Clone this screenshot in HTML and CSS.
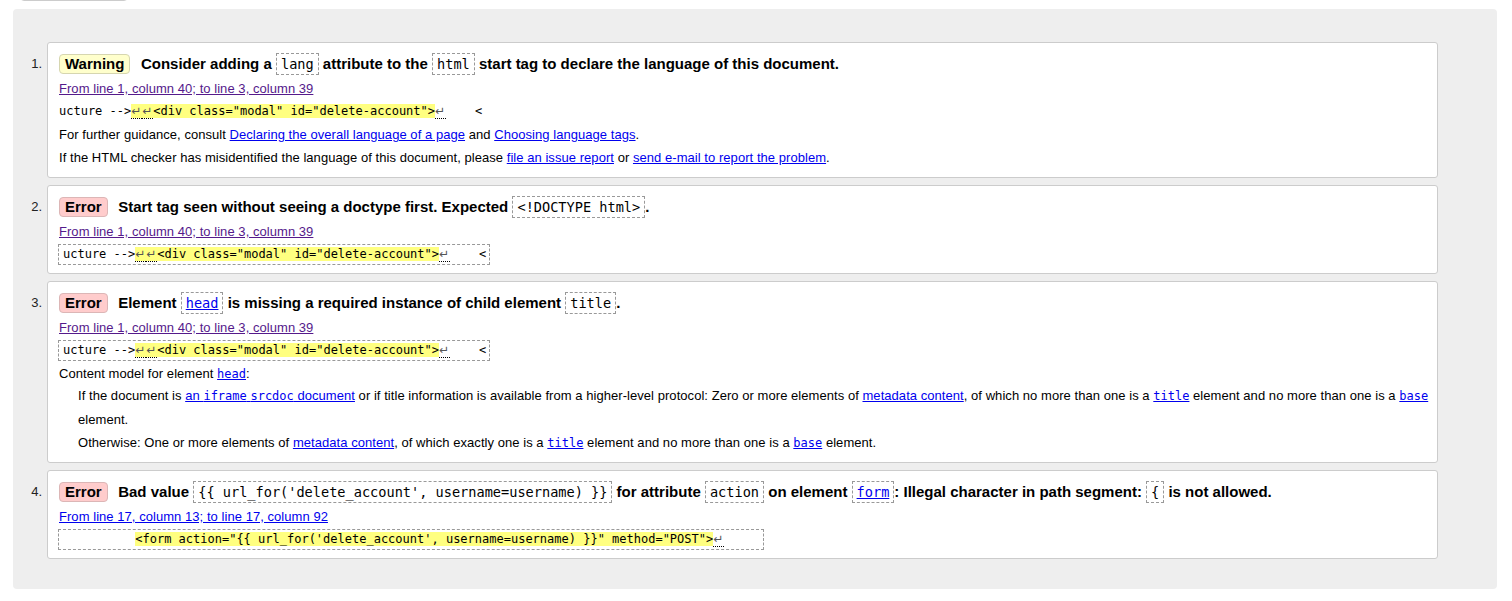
FILE: index.html
```html
<!DOCTYPE html>
<html lang="en">
<head>
<meta charset="utf-8">
<title>Validation results</title>
<link rel="stylesheet" href="styles.css">
</head>
<body>
<div class="stub"></div>
<div class="panel">
  <ol class="results">
    <li class="item">
      <span class="num">1.</span>
      <div class="card tall">
        <p class="title"><strong class="badge warn">Warning</strong><span>Consider adding a <code>lang</code> attribute to the <code>html</code> start tag to declare the language of this document.</span></p>
        <p class="line"><a class="vis" href="#l1">From line 1, column 40; to line 3, column 39</a></p>
        <p><code class="ex plain">ucture --&gt;<b><span class="lf">↵</span><span class="lf">↵</span>&lt;div class="modal" id="delete-account"&gt;</b><span class="lf">↵</span>    &lt;</code></p>
        <p class="line">For further guidance, consult <a href="#g1">Declaring the overall language of a page</a> and <a href="#g2">Choosing language tags</a>.</p>
        <p class="line">If the HTML checker has misidentified the language of this document, please <a href="#g3">file an issue report</a> or <a href="#g4">send e-mail to report the problem</a>.</p>
      </div>
    </li>
    <li class="item">
      <span class="num">2.</span>
      <div class="card">
        <p class="title"><strong class="badge err">Error</strong><span>Start tag seen without seeing a doctype first. Expected <code>&lt;!DOCTYPE html&gt;</code>.</span></p>
        <p class="line"><a class="vis" href="#l2">From line 1, column 40; to line 3, column 39</a></p>
        <p><code class="ex boxed">ucture --&gt;<b><span class="lf">↵</span><span class="lf">↵</span>&lt;div class="modal" id="delete-account"&gt;</b><span class="lf">↵</span>    &lt;</code></p>
      </div>
    </li>
    <li class="item">
      <span class="num">3.</span>
      <div class="card">
        <p class="title"><strong class="badge err">Error</strong><span>Element <code><a href="#h1">head</a></code> is missing a required instance of child element <code>title</code>.</span></p>
        <p class="line"><a class="vis" href="#l3">From line 1, column 40; to line 3, column 39</a></p>
        <p><code class="ex boxed">ucture --&gt;<b><span class="lf">↵</span><span class="lf">↵</span>&lt;div class="modal" id="delete-account"&gt;</b><span class="lf">↵</span>    &lt;</code></p>
        <p class="cm">Content model for element <a class="mono" href="#h2">head</a>:</p>
        <div class="dd">
          <p class="line">If the document is <a href="#s1">an <span class="mono">iframe</span> <span class="mono">srcdoc</span> document</a> or if title information is available from a higher-level protocol: Zero or more elements of <a href="#m1">metadata content</a>, of which no more than one is a <a class="mono" href="#t1">title</a> element and no more than one is a <a class="mono" href="#b1">base</a> element.</p>
          <p class="line">Otherwise: One or more elements of <a href="#m2">metadata content</a>, of which exactly one is a <a class="mono" href="#t2">title</a> element and no more than one is a <a class="mono" href="#b2">base</a> element.</p>
        </div>
      </div>
    </li>
    <li class="item">
      <span class="num">4.</span>
      <div class="card">
        <p class="title"><strong class="badge err">Error</strong><span>Bad value <code>{{ url_for('delete_account', username=username) }}</code> for attribute <code>action</code> on element <code><a href="#f1">form</a></code>: Illegal character in path segment: <code>{</code> is not allowed.</span></p>
        <p class="line"><a href="#l4">From line 17, column 13; to line 17, column 92</a></p>
        <p><code class="ex boxed">          <b>&lt;form action="{{ url_for('delete_account', username=username) }}" method="POST"&gt;</b><span class="lf">↵</span>     </code></p>
      </div>
    </li>
  </ol>
</div>
</body>
</html>
```

FILE: styles.css
```css
* {
  box-sizing: border-box;
}

body {
  margin: 0;
  font-family: "Liberation Sans", Arial, sans-serif;
  font-size: 13px;
  color: #000;
  background: #fff;
}

.stub {
  width: 108px;
  height: 20px;
  margin: -19px 0 0 20px;
  border: 1px solid #ccc;
  border-radius: 4px;
  background: #fff;
}

.panel {
  margin: 8px 15px 0 13px;
  padding: 33px 59px 30px 0;
  background: #eee;
  border-radius: 4px;
}

.results {
  list-style: none;
  margin: 0;
  padding: 0;
  display: flex;
  flex-direction: column;
  gap: 7px;
}

.item {
  display: flex;
  align-items: flex-start;
}

.num {
  flex: 0 0 34px;
  padding: 8px 5px 0 0;
  text-align: right;
  line-height: 27px;
  color: #222;
}

.card {
  flex: 1;
  min-width: 0;
  background: #fff;
  border: 1px solid #ccc;
  border-radius: 3px;
  padding: 7px 4px 7px 11px;
}

.card.tall {
  padding-bottom: 8px;
}

p {
  margin: 0;
}

.title {
  font-weight: bold;
  font-size: 15px;
  line-height: 27px;
}

.badge {
  display: inline-block;
  padding: 1px 5px;
  line-height: 16px;
  border: 1px solid #ccc;
  border-radius: 4px;
  margin-right: 10.5px;
}

.warn {
  background: #ffffcc;
  border-color: #d6d6b0;
}

.err {
  background: #ffcccc;
  border-color: #dcb6b6;
}

.title code {
  font-family: "DejaVu Sans Mono", monospace;
  font-size: 13.6px;
  font-weight: normal;
  line-height: 16px;
  padding: 2px 4px;
  border: 1px dashed #999;
}

.line {
  line-height: 23px;
  letter-spacing: 0.05px;
}

a {
  color: #0000ee;
}

a.vis {
  color: #551a8b;
}

.mono {
  font-family: "DejaVu Sans Mono", monospace;
  font-size: 12px;
  letter-spacing: 0;
}

.ex {
  display: block;
  width: fit-content;
  font-family: "DejaVu Sans Mono", monospace;
  font-size: 12px;
  white-space: pre;
  color: #000;
}

.ex.plain {
  line-height: 23px;
}

.ex.boxed {
  margin: 1px 0 1px -1px;
  line-height: 19px;
  padding: 0 3px 0 4px;
  border: 1px dashed #999;
}

.ex b {
  font-weight: normal;
  background: #ffff80;
}

.lf {
  display: inline-block;
  width: 11px;
  line-height: 14px;
  border-bottom: 1px dotted #000;
  font-family: "DejaVu Sans", sans-serif;
  font-size: 12px;
  color: #555;
}

.cm {
  margin-top: 3px;
  line-height: 20px;
  letter-spacing: 0.05px;
}

.dd {
  padding-left: 19px;
}
```
